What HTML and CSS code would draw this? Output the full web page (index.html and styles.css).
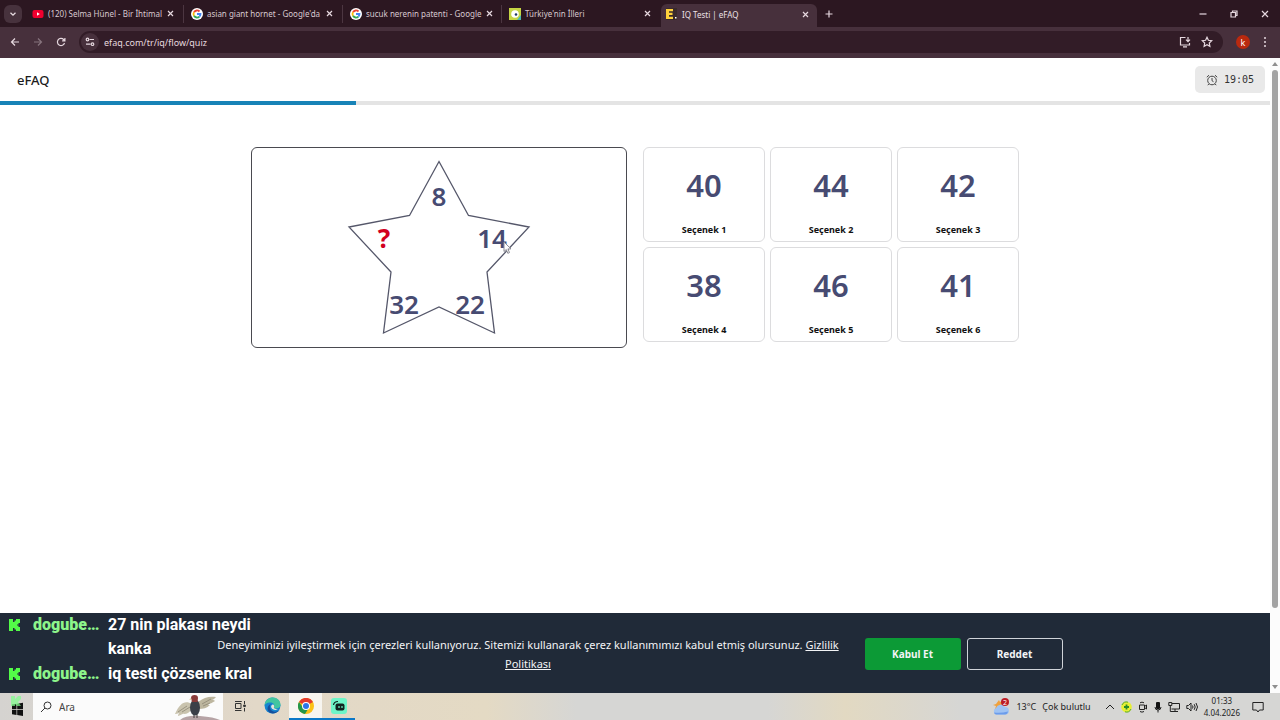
FILE: index.html
```html
<!DOCTYPE html>
<html lang="tr">
  <head>
    <meta charset="utf-8">
    <title>IQ Testi | eFAQ</title>
    <link rel="stylesheet" href="styles.css">
  </head>
  <body>
    <!-- tab strip -->
    <div class="tabs">
      <button class="tab-search" aria-label="Sekmelerde ara">
        <svg width="8" height="8" viewBox="0 0 8 8"><path d="M1.5 2.8L4 5.2l2.500-2.400" fill="none" stroke="#e8dde2" stroke-width="1.300"/></svg>
      </button>
      <div class="tab">
        <svg class="favicon" viewBox="0 0 12 12"><rect x="0.500" y="2" width="11" height="8" rx="2" fill="#f0002f"/><path d="M5 4.300v3.400L7.800 6z" fill="#fff"/></svg>
        <span class="title">(120) Selma Hünel - Bir İhtimal</span>
        <button class="close" aria-label="Kapat"><svg width="7" height="7" viewBox="0 0 7 7"><path d="M1 1l5 5M6 1L1 6"/></svg></button>
      </div>
      <div class="tab">
        <svg class="favicon" viewBox="0 0 12 12"><circle cx="6" cy="6" r="6" fill="#fff"/><g fill="none" stroke-width="1.800"><path d="M3 4.200A3.500 3.500 0 0 1 8.500 3.500" stroke="#ea4335"/><path d="M3 4.200a3.500 3.500 0 0 0 0 3.600" stroke="#fbbc05"/><path d="M3 7.800a3.500 3.500 0 0 0 5.400 .8" stroke="#34a853"/><path d="M8.400 8.600A3.500 3.500 0 0 0 9.500 6H6" stroke="#4285f4"/></g></svg>
        <span class="title">asian giant hornet - Google'da</span>
        <button class="close" aria-label="Kapat"><svg width="7" height="7" viewBox="0 0 7 7"><path d="M1 1l5 5M6 1L1 6"/></svg></button>
      </div>
      <div class="tab">
        <svg class="favicon" viewBox="0 0 12 12"><circle cx="6" cy="6" r="6" fill="#fff"/><g fill="none" stroke-width="1.800"><path d="M3 4.200A3.500 3.500 0 0 1 8.500 3.500" stroke="#ea4335"/><path d="M3 4.200a3.500 3.500 0 0 0 0 3.600" stroke="#fbbc05"/><path d="M3 7.800a3.500 3.500 0 0 0 5.400 .8" stroke="#34a853"/><path d="M8.400 8.600A3.500 3.500 0 0 0 9.500 6H6" stroke="#4285f4"/></g></svg>
        <span class="title">sucuk nerenin patenti - Google</span>
        <button class="close" aria-label="Kapat"><svg width="7" height="7" viewBox="0 0 7 7"><path d="M1 1l5 5M6 1L1 6"/></svg></button>
      </div>
      <div class="tab last">
        <svg class="favicon" viewBox="0 0 12 12"><path d="M0 0h12v12H0z" fill="#c6d544"/><path d="M8 12l4-5v5z" fill="#49b6b0"/><circle cx="6" cy="6" r="3.800" fill="#fff"/><circle cx="7" cy="6.500" r="1.300" fill="#223a63"/></svg>
        <span class="title">Türkiye'nin İlleri</span>
        <button class="close" aria-label="Kapat"><svg width="7" height="7" viewBox="0 0 7 7"><path d="M1 1l5 5M6 1L1 6"/></svg></button>
      </div>
      <div class="tab active">
        <svg class="favicon" viewBox="0 0 12 12"><path d="M0 0h11v12H0z" fill="#3a2a2c"/><path d="M0 1h7v2.300H3v1.500h3.500v2.200H3v1.700h4V11H0z" fill="#ffd23c"/><path d="M9 9h1.500v1.500H9z" fill="#fff"/></svg>
        <span class="title">IQ Testi | eFAQ</span>
        <button class="close" aria-label="Kapat"><svg width="7" height="7" viewBox="0 0 7 7"><path d="M1 1l5 5M6 1L1 6"/></svg></button>
      </div>
      <button class="new-tab" aria-label="Yeni sekme"><svg width="8" height="8" viewBox="0 0 8 8"><path d="M4 .5v7M.5 4h7"/></svg></button>
      <div class="window-buttons">
        <button aria-label="Küçült"><svg width="8" height="8" viewBox="0 0 8 8"><path d="M.5 4h7"/></svg></button>
        <button aria-label="Geri yükle"><svg width="8" height="8" viewBox="0 0 8 8"><path d="M1 2.500h4.500V7H1zM2.500 2.500V1H7v4.500H5.500"/></svg></button>
        <button aria-label="Pencereyi kapat"><svg width="8" height="8" viewBox="0 0 8 8"><path d="M1 1l6 6M7 1L1 7"/></svg></button>
      </div>
    </div>

    <!-- toolbar -->
    <div class="toolbar">
      <button aria-label="Geri"><svg width="10" height="10" viewBox="0 0 10 10"><path d="M9 5H1.500M5 1.500L1.500 5 5 8.500"/></svg></button>
      <button class="off" aria-label="İleri"><svg width="10" height="10" viewBox="0 0 10 10"><path d="M1 5h7.500M5 1.500L8.500 5 5 8.500"/></svg></button>
      <button aria-label="Yenile"><svg width="10" height="10" viewBox="0 0 10 10"><path d="M8.500 6A3.600 3.600 0 1 1 7.600 2.500L8.800 3.700M8.900 1v2.800H6.100"/></svg></button>
      <div class="omnibox">
        <button class="site-info" aria-label="Site bilgileri"><svg width="10" height="10" viewBox="0 0 10 10"><path d="M4.500 2.500H9M1 7.200h4.500"/><circle cx="2.500" cy="2.500" r="1.300"/><circle cx="7.500" cy="7.200" r="1.300"/></svg></button>
        <input class="url" type="text" value="efaq.com/tr/iq/flow/quiz" aria-label="Adres">
        <button aria-label="Uygulamayı yükle"><svg width="12" height="12" viewBox="0 0 12 12"><path d="M6.500 1.500H1.500v7.500h9V7M4 10.800h4M9 1v4.500M7 3.700l2 2 2-2"/></svg></button>
        <button aria-label="Yer işareti"><svg width="12" height="12" viewBox="0 0 12 12"><path d="M6 1.300l1.400 3 3.300.4-2.400 2.300.6 3.300L6 8.700l-2.900 1.600.6-3.300L1.300 4.700l3.300-.4z"/></svg></button>
      </div>
      <button class="avatar">k</button>
      <button aria-label="Menü"><svg width="4" height="12" viewBox="0 0 4 12"><g fill="#e6d8df" stroke="none"><circle cx="2" cy="2" r="1"/><circle cx="2" cy="6" r="1"/><circle cx="2" cy="10" r="1"/></g></svg></button>
    </div>

    <div class="view">
      <div class="page">
        <header class="header">
          <a class="brand" href="#">eFAQ</a>
          <div class="timer">
            <svg width="12" height="12" viewBox="0 0 12 12"><circle cx="6" cy="6.500" r="4.300"/><path d="M6 4v2.700l1.500 1M.8 3.200L3 1.200M11.200 3.200L9 1.200M2.800 10l-1 1.200M9.200 10l1 1.200"/></svg>
            <span>19:05</span>
          </div>
        </header>
        <div class="progress"><div class="progress-bar" style="width: 28%"></div></div>

        <main class="quiz">
          <div class="question">
            <svg class="star" width="200" height="180" viewBox="339 157 200 180">
              <path d="M439 161.500L468.500 215.500 529 227 487 272 494.500 333 439 307 383.500 333 391 272 349 227 409.500 215.500z"/>
              <text x="439" y="206">8</text>
              <text x="492" y="248">14</text>
              <text x="470" y="314">22</text>
              <text x="404" y="314">32</text>
              <text class="unknown" x="384" y="248">?</text>
            </svg>
            <svg class="cursor" width="10" height="14" viewBox="0 0 10 14"><path d="M1 1v9.500l2.300-2 1.500 3.800 1.700-.7-1.600-3.700H8z"/></svg>
          </div>
          <div class="options">
            <button class="option"><span class="number">40</span><span>Seçenek 1</span></button>
            <button class="option"><span class="number">44</span><span>Seçenek 2</span></button>
            <button class="option"><span class="number">42</span><span>Seçenek 3</span></button>
            <button class="option"><span class="number">38</span><span>Seçenek 4</span></button>
            <button class="option"><span class="number">46</span><span>Seçenek 5</span></button>
            <button class="option"><span class="number">41</span><span>Seçenek 6</span></button>
          </div>
        </main>

        <div class="cookies">
          <p>Deneyiminizi iyileştirmek için çerezleri kullanıyoruz. Sitemizi kullanarak çerez kullanımımızı kabul etmiş olursunuz. <a href="#">Gizlilik Politikası</a></p>
          <div class="cookie-buttons">
            <button class="accept">Kabul Et</button>
            <button class="reject">Reddet</button>
          </div>
        </div>
      </div>
      <div class="scrollbar">
        <svg width="6" height="4" viewBox="0 0 6 4"><path d="M0 4l3-4 3 4z"/></svg>
        <div class="track"><div class="thumb"></div></div>
        <svg width="6" height="4" viewBox="0 0 6 4"><path d="M0 0l3 4 3-4z"/></svg>
      </div>
    </div>

    <!-- stream chat, floats over everything -->
    <div class="chat">
      <svg viewBox="0 0 11 12"><path d="M0 0h4v3h1.500V1.500H7V0h4v4H9.500v1.500H8v1h1.500V8H11v4H7v-1.500H5.500V9H4v3H0z"/></svg>
      <b class="user">dogube…</b>
      <span>27 nin plakası neydi kanka</span>
      <svg viewBox="0 0 11 12"><path d="M0 0h4v3h1.500V1.500H7V0h4v4H9.500v1.500H8v1h1.500V8H11v4H7v-1.500H5.500V9H4v3H0z"/></svg>
      <b class="user">dogube…</b>
      <span>iq testi çözsene kral</span>
    </div>

    <div class="taskbar">
      <button class="start" aria-label="Başlat"><svg width="14" height="22" viewBox="0 0 14 22"><path d="M2 8.500l4.500-.7V13H2zM7.200 7.700L13 6.800V13H7.200zM2 13.700h4.500v5.200L2 18.200zM7.200 13.700H13v6.200L7.200 19z" fill="#111"/><path d="M1 0h4v3l3-3h3v3L8 6l3 4H7L5 8v2H1z" fill="#7dff8a" opacity=".7"/></svg></button>
      <label class="search">
        <svg width="12" height="12" viewBox="0 0 12 12"><circle cx="7.500" cy="4.500" r="3.500"/><path d="M5 7l-4 4"/></svg>
        <input type="text" placeholder="Ara">
        <svg class="bird" width="48" height="26" viewBox="0 0 48 26">
          <path d="M8 26q6-5 20-4t20 4z" fill="#b6a3a5"/>
          <path d="M20 10C13 6 8 9 3 20c3 0 3-1 4-1-1 2-1 2-1 3 4-1 5-3 6-2 3 0 6-2 8-5z" fill="#c9c3ae"/>
          <path d="M26 8c6-5 12-6 18-5-2 2-2 2-4 3 2 0 2 0 3 1-3 2-5 3-7 3 1 1 1 1 2 1-3 3-7 4-11 4z" fill="#bdb69f"/>
          <path d="M6 18l9-6M10 18l8-5M30 10l9-5M31 12l7-3" stroke="#8d8775" stroke-width=".8"/>
          <ellipse cx="23" cy="13.500" rx="5" ry="8" fill="#3b3f48"/>
          <path d="M19 4q0-3 3.500-3T26 4l-.5 4H20z" fill="#8a3b3a"/><path d="M19 4l-2 1.500 2.500.5z" fill="#ddc9a2"/>
          <path d="M22 21v3M25 20v4" stroke="#413c3c"/>
        </svg>
      </label>
      <button class="task" aria-label="Görev görünümü"><svg width="12" height="12" viewBox="0 0 12 12" fill="none" stroke="#333"><path d="M1.500 3.500h5.500v5H1.500zM1.500 1v1M7 1v1M1 1.500h6.500M1 10.500h6.500M10.500 1v3M10.500 8v3.500"/><path d="M9.700 5h1.600v1.600H9.700z" fill="#333"/></svg></button>
      <button class="task" aria-label="Edge"><svg width="17" height="17" viewBox="0 0 17 17"><circle cx="8.500" cy="8.500" r="8" fill="#1684d0"/><path d="M.6 8C1 3 5 .5 8.500.5c5 0 8 3.500 8 7 0 3-2.500 4-4.500 4-1.500 0-2.500-.6-2-1.400C11.500 7 8 5 5.500 5.500 3 5.700 1.200 7 .6 8z" fill="#42c6a0"/><path d="M6.800 7c-2 2.500-.8 7 3.700 7.800 2 .2 4-.8 5.200-2C13 16.500 9 17 6.500 16 2 14 3 8.500 6.800 7z" fill="#154f9c"/><path d="M9 7.200c-1.800.6-2.300 2.300-1.600 3.600 1.200 2.200 4 2.600 6.600 1.500-2 .2-4.700-.8-4-2.200.5-1 .2-2.100-1-2.900z" fill="#e8e5db"/></svg></button>
      <button class="task running current" aria-label="Chrome"><svg width="16" height="16" viewBox="0 0 16 16"><circle cx="8" cy="8" r="8" fill="#fbc116"/><path d="M8 8L1 4A8 8 0 0 1 15 4z" fill="#e33b2e"/><path d="M1 4a8 8 0 0 0 6 12l4-6.500H5z" fill="#23964a"/><circle cx="8" cy="8" r="4" fill="#fff"/><circle cx="8" cy="8" r="3" fill="#2c75e8"/></svg></button>
      <button class="task running" aria-label="Streamlabs"><svg width="16" height="16" viewBox="0 0 16 16"><rect width="16" height="16" rx="3" fill="#6ef5c8"/><path d="M6.500 5.500h5q2 0 2 2v3q0 2-2 2h-5q-2 0-2-2v-3q0-2 2-2z" fill="#10231f"/><path d="M2.500 7q.5-3.500 4.500-3.500" fill="none" stroke="#10231f" stroke-width="1.200"/><path d="M8 8v2M11 8v2" stroke="#6ef5c8" stroke-width="1.200"/></svg></button>

      <div class="tray">
        <button class="weather">
          <svg width="18" height="18" viewBox="0 0 18 18"><path d="M7 2l1 2 2-1 1 8H3l1-3-3-1 3-1z" fill="#f0a13c"/><path d="M4 16.500a3.500 3.500 0 0 1 0-6.500 5 5 0 0 1 9-1 3.800 3.800 0 0 1 1 7.500z" fill="#9fc3f3"/><path d="M2 14.500q7 1 14-1-.5 3-3 3H4q-1.500 0-2-2z" fill="#6b9ceb"/><circle cx="13" cy="4" r="4" fill="#bd1c25"/><text x="13" y="7" fill="#fff" font-size="7" text-anchor="middle">2</text></svg>
          <span>13°C</span>
          <span>Çok bulutlu</span>
        </button>
        <svg width="10" height="12" viewBox="0 0 10 12"><path d="M1 8l4-4 4 4"/></svg>
        <svg width="11" height="12" viewBox="0 0 11 12"><circle cx="5.500" cy="6" r="5.300" fill="#e7ef34" stroke="none"/><path d="M1 4a5 5 0 0 1 6-2.800M10 8a5 5 0 0 1-6 2.800" stroke="#54a82d"/><path d="M5.500 3.500v5M3 6h5" stroke="#298b2a" stroke-width="1.800"/></svg>
        <svg width="10" height="12" viewBox="0 0 10 12"><path d="M1.500 4h5v4.500h-5zM6.500 5.500l2-1.500v4l-2-1.500M2 1.800q2-1.300 4 0M2 10.500q2 1.300 4 0"/></svg>
        <svg width="8" height="12" viewBox="0 0 8 12"><rect x="2" y="1" width="4" height="7" rx="1" fill="#111" stroke="none"/><path d="M1 6q0 3 3 3t3-3M4 9v2.500"/></svg>
        <svg width="12" height="12" viewBox="0 0 12 12"><path d="M4 2.500h7.500v5.500H3.500M7 8v2.500M4 10.500h6M.8 1.500h3v3h-3zM2.300 4.500v6H4"/></svg>
        <svg width="12" height="12" viewBox="0 0 12 12"><path d="M.8 4.500h1.700L5 2v8L2.500 7.500H.8zM6.500 4.500q1 1.500 0 3M8.200 3.200q2 2.800 0 5.600M10 2q3 4 0 8"/></svg>
        <div class="clock"><span>01:33</span><span>4.04.2026</span></div>
        <svg width="12" height="12" viewBox="0 0 12 12"><path d="M.8 1.500h10.400v7.500H7.500L6 11 4.500 9H.8z"/></svg>
      </div>
    </div>
  </body>
</html>
```
FILE: styles.css
```css
* { box-sizing: border-box; }
body {
  margin: 0;
  height: 100vh;
  display: flex;
  flex-direction: column;
  font-family: "Noto Sans", sans-serif;
  font-size: 9px;
  background: #fff;
  overflow: hidden;
}
button {
  display: flex;
  align-items: center;
  justify-content: center;
  padding: 0;
  border: none;
  background: none;
  color: inherit;
  font: inherit;
}
svg { display: block; flex: none; }

/* TABS ======================================== */
.tabs {
  display: flex;
  align-items: center;
  height: 27px;
  padding-left: 4px;
  background: #2c1721;
  color: #d8c9d0;
}
.tabs svg:not(.favicon), .toolbar svg {
  fill: none;
  stroke: #e6d8df;
  stroke-width: 1.2;
}
.tab-search {
  width: 18px;
  height: 18px;
  margin-right: 3px;
  border-radius: 6px;
  background: #47323d;
}
.tab {
  display: flex;
  align-items: center;
  gap: 4px;
  width: 159px;
  height: 18px;
  padding: 0 8px 0 7px;
  border-right: 1px solid #4c3641;
}
.tab.last { border-color: transparent; }
.favicon {
  width: 12px;
  height: 12px;
}
.title {
  flex: 1;
  font-size: 8px;
  white-space: nowrap;
}
.close {
  width: 10px;
  height: 12px;
}
.tab.active {
  width: 156px;
  height: 23px;
  align-self: flex-end;
  padding: 0 7px 3px 5px;
  border: none;
  border-radius: 6px 6px 0 0;
  background: #47303c;
  color: #ece0e6;
}
.new-tab {
  width: 24px;
  height: 20px;
}
.window-buttons {
  display: flex;
  margin-left: auto;
}
.window-buttons button {
  width: 31px;
  height: 27px;
}

/* TOOLBAR ===================================== */
.toolbar {
  display: flex;
  align-items: center;
  height: 31px;
  padding: 0 13px 1px 10px;
  gap: 13px;
  background: #47303c;
  color: #e6d8df;
}
.off { opacity: 0.4; }
.omnibox {
  flex: 1;
  display: flex;
  align-items: center;
  gap: 10px;
  height: 22px;
  padding: 0 10px 0 2px;
  border-radius: 11px;
  background: #321c27;
}
.site-info {
  width: 18px;
  height: 18px;
  border-radius: 9px;
  background: #47303c;
}
.url {
  flex: 1;
  margin-left: -5px;
  padding: 0;
  border: none;
  outline: none;
  background: none;
  color: #e6d8df;
  font: inherit;
}
.avatar {
  width: 14px;
  height: 14px;
  border-radius: 7px;
  background: #b9290f;
  color: #fff;
}

/* PAGE ======================================== */
.view {
  flex: 1;
  display: flex;
  min-height: 0;
}
.page {
  flex: 1;
  display: flex;
  flex-direction: column;
}
.header {
  display: flex;
  align-items: center;
  justify-content: space-between;
  height: 43px;
  padding: 0 5px 0 17px;
}
.brand {
  color: #1c1c1c;
  font-size: 13px;
  font-weight: 500;
  text-decoration: none;
}
.timer {
  display: flex;
  align-items: center;
  justify-content: center;
  gap: 6px;
  width: 70px;
  height: 27px;
  border-radius: 5px;
  background: #e9e9e9;
  color: #333;
  font: 10px "DejaVu Sans Mono", monospace;
}
.timer svg {
  fill: none;
  stroke: #444;
}
.progress {
  height: 4px;
  background: #e4e4e4;
}
.progress-bar {
  height: 100%;
  background: #1883b7;
}

.quiz {
  flex: 1;
  display: grid;
  grid-template-columns: 1fr 1fr;
  align-items: start;
  gap: 16px;
  width: 100%;
  max-width: 768px;
  margin: 0 auto;
  padding-top: 42px;
}
.question {
  position: relative;
  display: flex;
  justify-content: center;
  padding: 9px 0 10px;
  border: 1px solid #4a4a50;
  border-radius: 6px;
}
.star path {
  fill: none;
  stroke: #55576a;
  stroke-width: 1.3;
}
.star text {
  fill: #474b72;
  font-size: 26px;
  font-weight: 600;
  text-anchor: middle;
}
.star .unknown {
  fill: #d2001f;
  font-weight: 700;
}
.cursor {
  position: absolute;
  left: 67%;
  top: 93px;
  fill: #fff;
  stroke: #8b8b93;
}
.options {
  display: grid;
  grid-template-columns: repeat(3, 1fr);
  gap: 5px;
}
.option {
  flex-direction: column;
  justify-content: flex-end;
  gap: 15px;
  height: 95px;
  padding-bottom: 5px;
  border: 1px solid #dcdcde;
  border-radius: 6px;
  color: #111;
  font-weight: 700;
}
.number {
  color: #474b72;
  font-size: 31px;
  font-weight: 600;
  line-height: 46px;
}

/* COOKIES ===================================== */
.cookies {
  display: flex;
  align-items: center;
  justify-content: center;
  gap: 16px;
  height: 80px;
  padding-top: 1px;
  background: #202a38;
  color: #f3f4f6;
}
.cookies p {
  max-width: 641px;
  margin: 0;
  font-size: 11px;
  line-height: 19px;
  text-align: center;
}
.cookies a { color: inherit; }
.cookie-buttons {
  display: flex;
  gap: 6px;
}
.cookie-buttons button {
  width: 96px;
  height: 32px;
  border-radius: 3px;
  font-size: 10px;
  font-weight: 700;
}
.accept { background: #0c9a36; }
.cookie-buttons .reject { border: 1px solid #cfd3d8; }

.scrollbar {
  display: flex;
  flex-direction: column;
  align-items: center;
  gap: 4px;
  width: 10px;
  padding: 4px 0;
  background: #fcfcfc;
  fill: #8f8f8f;
}
.track { flex: 1; }
.thumb {
  width: 6px;
  height: 88%;
  border-radius: 3px;
  background: #a3a3a3;
}

/* CHAT ======================================== */
.chat {
  position: absolute;
  left: 9px;
  bottom: 34px;
  display: grid;
  grid-template-columns: 11px 66px 160px;
  column-gap: 13px;
  row-gap: 1px;
  color: #fff;
  font: 700 16px/24px Roboto, sans-serif;
}
.chat svg {
  width: 11px;
  height: 12px;
  margin-top: 6px;
  fill: #53fc48;
}
.user {
  color: #8df58b;
  white-space: nowrap;
}
.chat span { margin-left: -4px; }

/* TASKBAR ===================================== */
.taskbar {
  display: flex;
  height: 27px;
  background: linear-gradient(to right, #d5d3d0, #e2d8c8 20%, #e4dac4 38%, #d6d6d4 45%, #d6d6d4 60%, #e2d9c2 66%, #d6d6d4 75%);
  color: #222;
}
.start { width: 33px; }
.search {
  display: flex;
  align-items: center;
  gap: 7px;
  width: 190px;
  padding-left: 7px;
  background: #fbfbfb;
}
.search svg:not(.bird) {
  fill: none;
  stroke: #333;
}
.search input {
  width: 106px;
  padding: 0;
  border: none;
  outline: none;
  background: none;
  font: 10px "Noto Sans", sans-serif;
}
.search input::placeholder { color: #444; }
.task {
  width: 33px;
  border-bottom: 2px solid transparent;
}
.task.running { border-color: #0a78c8; }
.task.current { background: #f7f5f0; }
.tray {
  display: flex;
  align-items: center;
  gap: 6px;
  margin-left: auto;
  padding-right: 16px;
}
.tray > svg {
  fill: none;
  stroke: #222;
}
.weather {
  gap: 6px;
  margin-right: 8px;
}
.clock {
  display: flex;
  flex-direction: column;
  align-items: center;
  margin-right: 6px;
  font-size: 8px;
  line-height: 12px;
}
```
